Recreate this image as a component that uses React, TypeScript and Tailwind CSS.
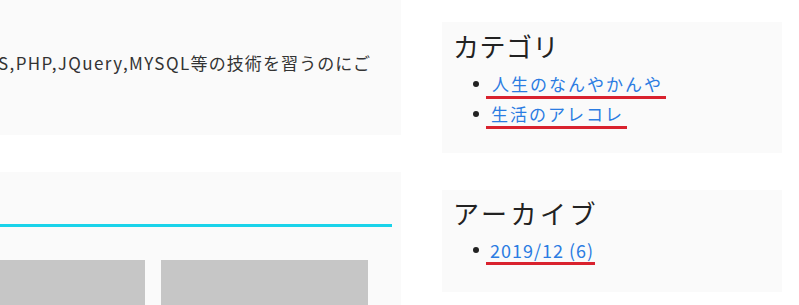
import React from "react";

const font = { fontFamily: '"Noto Sans CJK JP", "Noto Sans", sans-serif' };

function LinkRow({ text, cls }: { text: string; cls: string }) {
  return (
    <li className="flex h-[30px] items-center">
      <span className="ml-[31px] mr-[7px] h-[6px] w-[6px] shrink-0 rounded-full bg-[#222]" />
      <a
        href="#"
        className={`mt-[3px] self-start border-b-[3px] border-[#d9222e] leading-[24px] text-[#2b7ce2] ${cls}`}
      >
        {text}
      </a>
    </li>
  );
}

export default function App() {
  return (
    <div className="h-[305px] w-[799px] overflow-hidden bg-white text-[#333]" style={font}>
      <div className="flex gap-[41px]">
        {/* left column */}
        <div className="flex w-[401px] flex-col gap-[37px]">
          <div className="h-[135px] overflow-hidden bg-[#fafafa] pt-[51px]">
            <p className="-ml-[2px] whitespace-nowrap text-[17px] leading-[24px] text-[#333]">
              <span className="tracking-[1.4px]">S,PHP,JQuery,MYSQL</span>
              <span className="tracking-[1.1px]">等の技術を習うのにご</span>
            </p>
          </div>
          <div className="h-[200px] overflow-hidden bg-[#fafafa] pr-[9px] pt-[52px]">
            <div className="h-[3px] bg-[#19d3ea]" />
            <div className="mt-[33px] flex gap-[16px]">
              <div className="h-[120px] w-[145px] bg-[#c6c6c6]" />
              <div className="h-[120px] w-[207px] bg-[#c6c6c6]" />
            </div>
          </div>
        </div>
        {/* right column */}
        <div className="flex w-[340px] flex-col gap-[37px] pt-[22px]">
          <div className="h-[131px] bg-[#fafafa] pl-[11px] pt-[7px]">
            <h3 className="text-[26px] leading-[34px] tracking-[0.5px] text-[#222]">カテゴリ</h3>
            <ul className="-ml-[11px] mt-[6px]">
              <LinkRow text="人生のなんやかんや" cls="pl-[6px] pr-[3px] text-[17px] tracking-[2px]" />
              <LinkRow text="生活のアレコレ" cls="pl-[5px] pr-[3px] text-[17px] tracking-[2px]" />
            </ul>
          </div>
          <div className="h-[102px] bg-[#fafafa] pl-[11px] pt-[6px]">
            <h3 className="text-[26px] leading-[34px] tracking-[3.5px] text-[#222]">アーカイブ</h3>
            <ul className="-ml-[11px] mt-[5px]">
              <LinkRow text="2019/12 (6)" cls="pl-[4px] pr-[1px] text-[18px] tracking-[1px]" />
            </ul>
          </div>
        </div>
      </div>
    </div>
  );
}
